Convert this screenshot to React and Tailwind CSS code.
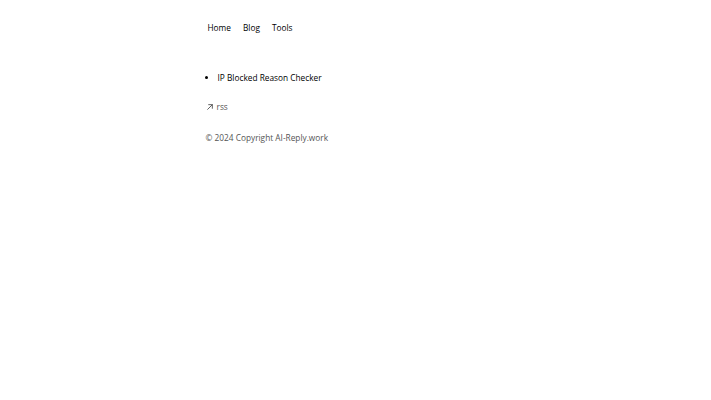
export default function App() {
  return (
    <div
      className="min-h-screen bg-white text-black"
      style={{ fontFamily: '"Open Sans", sans-serif' }}
    >
      <div className="mx-auto w-[300px] pt-[22px] text-[8.3px] leading-[12.5px]">
        <nav className="flex gap-[12px] px-[2px]">
          <a href="#">Home</a>
          <a href="#">Blog</a>
          <a href="#">Tools</a>
        </nav>
        <ul className="mt-[37.5px] list-disc pl-[12px]">
          <li>IP Blocked Reason Checker</li>
        </ul>
        <footer className="mt-[16.5px] text-[#555]">
          <a href="#" className="flex items-center gap-[3px]">
            <svg width="8" height="8" viewBox="0 0 24 24" fill="none" stroke="currentColor" strokeWidth="2.8" strokeLinecap="round" strokeLinejoin="round">
              <path d="M5 19L19 5M8 5h11v11" />
            </svg>
            rss
          </a>
          <p className="mt-[18.5px]">© 2024 Copyright AI-Reply.work</p>
        </footer>
      </div>
    </div>
  )
}
